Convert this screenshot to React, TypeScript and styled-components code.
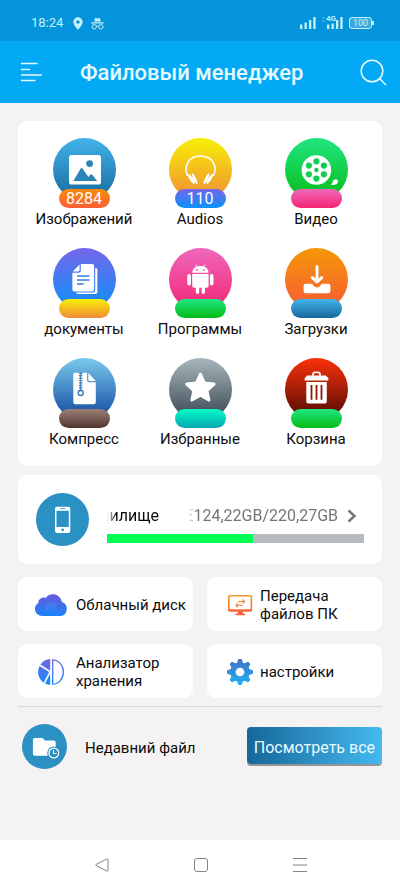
import React from "react";
import styled, { createGlobalStyle } from "styled-components";

const GlobalStyle = createGlobalStyle`
  *, *::before, *::after { box-sizing: border-box; }
  body {
    margin: 0;
    background: #f4f2f3;
    color: #0c0c0c;
    font-family: Roboto, "Noto Sans", sans-serif;
    font-size: 16px;
  }
  button {
    border: 0;
    padding: 0;
    background: none;
    color: inherit;
    font: inherit;
    cursor: pointer;
  }
  svg { display: block; flex: none; }
`;

const Screen = styled.div`
  display: flex;
  flex-direction: column;
  min-height: 100vh;
`;

const StatusBar = styled.div`
  display: flex;
  align-items: center;
  justify-content: space-between;
  height: 41px;
  padding: 5px 28px 0 31px;
  background: #0494dc;
  color: #c4f1f8;
`;

const StatusGroup = styled.div<{ $gap: number }>`
  display: flex;
  align-items: center;
  gap: ${(p) => p.$gap}px;
`;

const Clock = styled.time`
  margin-right: 2px;
  font-size: 13px;
  line-height: 16px;
`;

const MobileSignal = styled.span`
  position: relative;
`;

const NetworkType = styled.span`
  position: absolute;
  left: 4px;
  top: -2px;
  font-size: 8px;
  line-height: 8px;
  font-weight: 700;
`;

const Battery = styled.span`
  position: relative;
  display: flex;
  align-items: center;
  justify-content: center;
  width: 23px;
  height: 12px;
  border: 1px solid currentColor;
  border-radius: 3px;
  background: #3ba9df;
  font-size: 9px;
  line-height: 10px;

  &::after {
    content: "";
    position: absolute;
    left: 22px;
    top: 3px;
    width: 2px;
    height: 4px;
    background: currentColor;
  }
`;

const Header = styled.header`
  display: flex;
  align-items: center;
  height: 62px;
  padding: 0 13px 0 20px;
  background: #04a9f6;
  color: #e6fbff;
`;

const Title = styled.h1`
  flex: 1;
  margin: 2px 0 0 38px;
  font-size: 22px;
  line-height: 28px;
  font-weight: 500;
`;

const Content = styled.main`
  flex: 1;
  padding: 18px 18px 0;
`;

const Card = styled.section`
  border-radius: 9px;
  background: #fff;
`;

const CategoryGrid = styled(Card)`
  display: grid;
  grid-template-columns: repeat(3, 1fr);
  row-gap: 18px;
  padding: 17px 8px 16px;
`;

const Category = styled.button`
  display: flex;
  flex-direction: column;
  align-items: center;
`;

const Disc = styled.span<{ $fill: string; $size: number }>`
  display: flex;
  flex: none;
  width: ${(p) => p.$size}px;
  height: ${(p) => p.$size}px;
  border-radius: 50%;
  background: ${(p) => p.$fill};
  color: #fff;
`;

const Count = styled.span<{ $fill: string }>`
  width: 51px;
  height: 19px;
  margin-top: -12px;
  border-radius: 10px;
  background: ${(p) => p.$fill};
  color: #fff;
  font-size: 16px;
  line-height: 19px;
`;

const CategoryName = styled.span`
  margin-top: 1px;
  font-size: 15px;
  line-height: 21px;
  white-space: nowrap;
`;

const StorageCard = styled(Card)`
  display: flex;
  align-items: center;
  gap: 18px;
  height: 89px;
  margin-top: 9px;
  padding: 0 18px;
`;

const StorageInfo = styled.div`
  flex: 1;
  min-width: 0;
`;

const StorageHeading = styled.div`
  display: flex;
  align-items: center;
  height: 20px;
  margin: 10px 7px 8px 0;
`;

const Marquee = styled.span<{ $width: number; $muted?: boolean }>`
  display: flex;
  justify-content: flex-end;
  width: ${(p) => p.$width}px;
  margin-left: ${(p) => (p.$muted ? "auto" : "0")};
  margin-right: ${(p) => (p.$muted ? "9px" : "0")};
  overflow: hidden;
  color: ${(p) => (p.$muted ? "#757575" : "#0c0c0c")};
  font-size: 16px;
  line-height: 20px;
  white-space: nowrap;
  mask-image: linear-gradient(90deg, transparent, #000 9px);
`;

const Track = styled.div`
  height: 9px;
  background: #b8bcc2;
`;

const Used = styled.div`
  height: 100%;
  background: #00ff55;
`;

const Tiles = styled.div`
  display: grid;
  grid-template-columns: repeat(2, 1fr);
  gap: 13px 14px;
  margin-top: 13px;
`;

const Tile = styled.button<{ $compact?: boolean }>`
  && {
    display: flex;
    align-items: center;
    gap: ${(p) => (p.$compact ? 7 : 9)}px;
    height: 54px;
    padding: 1px 0 0 ${(p) => (p.$compact ? 20 : 17)}px;
    border-radius: 9px;
    background: #fff;
    font-size: 15px;
    line-height: 18px;
    text-align: left;
  }
`;

const Divider = styled.hr`
  height: 1px;
  margin: 8px 0 17px;
  border: 0;
  background: #dad8d9;
`;

const Recent = styled.section`
  display: flex;
  align-items: center;
  padding-left: 4px;
`;

const RecentName = styled.h2`
  flex: 1;
  margin: 2px 0 0 18px;
  font-size: 15px;
  line-height: 20px;
  font-weight: 400;
`;

const ShowAll = styled.button`
  && {
    height: 37px;
    margin-bottom: 2px;
    padding: 3px 7px 0;
    border-radius: 4px;
    background: linear-gradient(90deg, #176799, #44baf0);
    box-shadow: 0 2px 0 #949494;
    color: #e9fbff;
    white-space: nowrap;
  }
`;

const NavBar = styled.nav`
  display: grid;
  grid-template-columns: repeat(3, 1fr);
  height: 49px;
  padding: 0 51px 0 52px;
  background: #fff;
  color: #858585;
`;

const NavButton = styled.button`
  display: flex;
  align-items: center;
  justify-content: center;
`;

function SignalIcon() {
  return (
    <svg width="16" height="12" viewBox="0 0 16 12" fill="currentColor" aria-hidden="true">
      <path d="M0 7.5h2.3V12H0zM4.5 5.5h2.3V12H4.5zM9 3h2.3v9H9zM13.3 0h2.3v12h-2.3z" />
    </svg>
  );
}

function PinIcon() {
  return (
    <svg width="10" height="13" viewBox="0 0 10 13" aria-hidden="true">
      <path
        fill="currentColor"
        fillRule="evenodd"
        d="M5 .3A4.7 4.7 0 0 0 .3 5C.3 8.3 5 12.7 5 12.7S9.7 8.3 9.7 5A4.7 4.7 0 0 0 5 .3Zm0 3a1.7 1.7 0 1 1 0 3.4 1.7 1.7 0 0 1 0-3.4Z"
      />
    </svg>
  );
}

function IncognitoIcon() {
  return (
    <svg width="13" height="13" viewBox="0 0 13 13" aria-hidden="true">
      <path d="M3.2 4.6 4.2.8l2.3.7L8.8.8l1 3.8ZM.3 5.3h12.4v1.2H.3z" fill="currentColor" />
      <g fill="none" stroke="currentColor">
        <circle cx="3.2" cy="9.8" r="2.2" />
        <circle cx="9.8" cy="9.8" r="2.2" />
        <path d="M5.3 9.4c.8-.5 1.6-.5 2.4 0" />
      </g>
    </svg>
  );
}

function Glyph({ children }: { children: React.ReactNode }) {
  return (
    <svg width="63" height="63" viewBox="0 0 63 63" fill="currentColor" aria-hidden="true">
      {children}
    </svg>
  );
}

const imageGlyph = (
  <Glyph>
    <rect x="16" y="17" width="32" height="29.5" rx="2.6" />
    <g fill="#2a84b4">
      <circle cx="36.6" cy="25.6" r="3.4" />
      <path d="M20.3 43 27.7 30.6q.9-1.2 1.8 0l6 8.4 1.9-2.4q.8-.8 1.6 0L44.2 43Z" />
    </g>
  </Glyph>
);

const headphonesGlyph = (
  <Glyph>
    <path
      d="M18.6 38C14 27.500 20 18 31.500 18s17.500 9.500 12.900 20"
      fill="none"
      stroke="currentColor"
      strokeWidth="1.5"
    />
    <g id="ear">
      <ellipse cx="22.4" cy="41" rx="1.7" ry="5.8" transform="rotate(-32 22.4 41)" />
      <ellipse cx="25.7" cy="40.8" rx="1.3" ry="6" transform="rotate(-26 25.7 40.8)" />
    </g>
    <use href="#ear" transform="translate(63 0) scale(-1 1)" />
  </Glyph>
);

const reelHoles = [
  [31.4, 23.3],
  [38.9, 27.6],
  [38.9, 36.3],
  [31.4, 40.6],
  [23.9, 36.3],
  [23.9, 27.6],
];

const videoGlyph = (
  <Glyph>
    <circle cx="31.4" cy="32" r="14.8" />
    <g fill="#12cd51">
      {reelHoles.map(([x, y]) => (
        <circle key={`${x}-${y}`} cx={x} cy={y} r="3.1" />
      ))}
      <circle cx="31.4" cy="32" r="2.2" />
    </g>
    <path d="M44.8 46.6c3.2-.2 2-2.7 4-4.6 2-1.8 4.6-.4 4.2 1.8-.5 3.6-5 3.4-8.2 2.8Z" />
  </Glyph>
);

const documentsGlyph = (
  <Glyph>
    <path d="M42.2 20h.5q1.7 0 1.7 1.7v22.6q0 1.8-1.8 1.8H25.3q-2 0-2.2-1.7h16.6q2.5 0 2.5-2.5Z" />
    <path d="M27.8 16h11.5q1.8 0 1.8 1.8v23.8q0 1.9-1.8 1.9H21.2q-1.8 0-1.8-1.9V24.8h6.3q2.1 0 2.1-2.1Z" />
    <path d="M19.8 23.4 26.6 16.5v5.2q0 1.7-1.7 1.7Z" />
    <path d="M24 28h12.5M24 32h12.5M24 36h6.5" stroke="#2b7ee9" strokeWidth="1.6" />
  </Glyph>
);

const androidGlyph = (
  <Glyph>
    <path d="M23.2 24.7c.2-4 3.4-6.6 8.2-6.6s8 2.6 8.2 6.6ZM23.2 26h16.4v11.7q0 2-2 2H36v4.5a1.7 1.7 0 0 1-3.4 0v-4.5h-2.4v4.5a1.7 1.7 0 0 1-3.4 0v-4.5h-1.6q-2 0-2-2Z" />
    <rect x="18.3" y="26" width="3.6" height="11.6" rx="1.8" />
    <rect x="40.9" y="26" width="3.6" height="11.6" rx="1.8" />
    <path d="m26.6 16.4 1.6 2.8M36.2 16.4l-1.6 2.8" stroke="currentColor" strokeWidth=".8" />
    <g fill="#f04fa2">
      <circle cx="27.8" cy="22" r=".9" />
      <circle cx="35" cy="22" r=".9" />
    </g>
  </Glyph>
);

const downloadGlyph = (
  <Glyph>
    <path
      d="M32 18.5v14M27.3 29.6 32 34l4.7-4.4"
      fill="none"
      stroke="currentColor"
      strokeWidth="3"
      strokeLinecap="round"
      strokeLinejoin="round"
    />
    <path d="M20.8 35.8h5.6q1.1 0 1.7 1.3c1.8 3.2 6 3.2 7.8 0q.6-1.3 1.7-1.3h5.6q2.2 0 2.2 2.2v5q0 2.3-2.2 2.3H20.8q-2.2 0-2.2-2.3v-5q0-2.2 2.2-2.2Z" />
  </Glyph>
);

const zipGlyph = (
  <Glyph>
    <path d="M21.8 14.7H34v7.4q0 2.2 2.2 2.2h6.6v20q0 1.9-1.9 1.9H22.2q-1.9 0-1.9-1.9V16.2q0-1.5 1.5-1.5Z" />
    <path d="M35.4 14.9v6.5q0 1.5 1.5 1.5h5.8Z" />
    <g stroke="#3c79ba" fill="none">
      <path d="M27.7 14.7v18" strokeWidth="3.4" strokeDasharray="1.2 1.2" />
      <path d="M27.7 14.7v18" strokeWidth="1" />
      <circle cx="27.7" cy="35" r="2.5" strokeWidth="1.4" />
    </g>
  </Glyph>
);

const starGlyph = (
  <Glyph>
    <path
      d="m31.4 16.2 4 8.8 9.7 1.1-7.2 6.5 2 9.4-8.5-4.8-8.5 4.8 2-9.4-7.2-6.5 9.7-1.1Z"
      stroke="currentColor"
      strokeWidth="3"
      strokeLinejoin="round"
    />
  </Glyph>
);

const trashGlyph = (
  <Glyph>
    <path
      d="M28 18.5v-2.2q0-2 2-2h3q2 0 2 2v2.2"
      fill="none"
      stroke="currentColor"
      strokeWidth="1.7"
    />
    <path d="M22.3 17.6h18.4q2.8 1.6 2.8 5H19.5q0-3.4 2.8-5ZM21.3 24.1h20.5v19.3q0 2-2 2H23.3q-2 0-2-2Z" />
    <path d="M26.5 27v14.8M31.5 27v14.8M36.5 27v14.8" stroke="#8b1b07" strokeWidth="1.8" />
  </Glyph>
);

const down = (from: string, to: string) => `linear-gradient(180deg, ${from}, ${to})`;

const blue = down("#42b3ea", "#17699c");
const green = down("#20e681", "#06bb17");
const pink = down("#ee68bb", "#f42473");
const violet = down("#7566eb", "#0b91fa");
const yellow = down("#f7f005", "#f08b38");
const orange = down("#f49705", "#f85a38");

const categories = [
  { name: "Изображений", count: "8284", disc: blue, pill: down("#fb8b0b", "#fb5f35"), glyph: imageGlyph },
  { name: "Audios", count: "110", disc: yellow, pill: violet, glyph: headphonesGlyph },
  { name: "Видео", count: "", disc: green, pill: pink, glyph: videoGlyph },
  { name: "документы", count: "", disc: violet, pill: yellow, glyph: documentsGlyph },
  { name: "Программы", count: "", disc: pink, pill: green, glyph: androidGlyph },
  { name: "Загрузки", count: "", disc: orange, pill: blue, glyph: downloadGlyph },
  { name: "Компресс", count: "", disc: down("#7bc9ed", "#0d459c"), pill: down("#9c8078", "#4f342e"), glyph: zipGlyph },
  { name: "Избранные", count: "", disc: down("#a8b5bc", "#36464e"), pill: down("#04fbc8", "#04a8b0"), glyph: starGlyph },
  { name: "Корзина", count: "", disc: down("#fa3009", "#4c0a04"), pill: green, glyph: trashGlyph },
];

function CloudIcon() {
  return (
    <svg width="32" height="22" viewBox="0 0 32 22" aria-hidden="true">
      <defs>
        <linearGradient id="cloud" x1="0" y1="0" x2="0" y2="1">
          <stop offset="0" stopColor="#6c58dc" />
          <stop offset="1" stopColor="#1684fa" />
        </linearGradient>
        <linearGradient id="puff" x1="0" y1="0" x2="0" y2="1">
          <stop offset="0" stopColor="#5b8cf2" />
          <stop offset="1" stopColor="#1684fa" />
        </linearGradient>
      </defs>
      <path
        d="M7 22a7 7 0 0 1-3.6-13C3.2 5.3 7.4 2.6 10.7 4 14-1.8 25-1.5 27 8.1A7.2 7.2 0 0 1 25.5 22Z"
        fill="url(#cloud)"
      />
      <circle cx="16" cy="14.500" r="6" fill="url(#puff)" opacity=".5" />
    </svg>
  );
}

function PieIcon() {
  return (
    <svg width="32" height="26" viewBox="0 0 32 26" aria-hidden="true">
      <defs>
        <linearGradient id="pie" gradientUnits="userSpaceOnUse" x1="0" y1="0" x2="0" y2="26">
          <stop offset="0" stopColor="#7663e4" />
          <stop offset="1" stopColor="#0d92fa" />
        </linearGradient>
      </defs>
      <path
        d="M15.2 0v11.8L5.4 5.6A13 13 0 0 1 15.2 0ZM4.6 6.9 14.2 13 8.6 23.7A13 13 0 0 1 4.6 6.9ZM15.2 14.5V26a13 13 0 0 1-5.2-1.5Z"
        fill="url(#pie)"
      />
      <path
        d="M17.7.8a10.7 12.2 0 0 1 0 24.4Z"
        fill="none"
        stroke="url(#pie)"
        strokeWidth="1.3"
      />
    </svg>
  );
}

function MonitorIcon() {
  return (
    <svg width="26" height="22" viewBox="0 0 26 22" aria-hidden="true">
      <defs>
        <linearGradient id="monitor" gradientUnits="userSpaceOnUse" x1="0" y1="0" x2="0" y2="22">
          <stop offset="0" stopColor="#f39b21" />
          <stop offset="1" stopColor="#f4593c" />
        </linearGradient>
      </defs>
      <g fill="none" stroke="url(#monitor)">
        <rect x="1.8" y="1.8" width="22.6" height="15" rx="1" strokeWidth="1.6" />
        <path d="M11 7.500h6.500M15.600 5.500l2 2-2 2M15.500 11.300H9M10.900 9.300 9 11.300l1.900 2" strokeWidth="1.1" />
      </g>
      <path d="M1.500 15.200h23.200v2.400H1.500zM11 17h4.500l.5 2.800h2v1.400H8.500v-1.400h2Z" fill="url(#monitor)" />
    </svg>
  );
}

function GearIcon() {
  const teeth = [0, 45, 90, 135, 180, 225, 270, 315];
  return (
    <svg width="26" height="26" viewBox="0 0 26 26" aria-hidden="true">
      <defs>
        <linearGradient id="gear" x1="0" y1="0" x2="0" y2="1">
          <stop offset="0" stopColor="#4470c4" />
          <stop offset="1" stopColor="#1db1f5" />
        </linearGradient>
        <mask id="gear-shape">
          <g fill="#fff">
            <circle cx="13" cy="13" r="9.8" />
            {teeth.map((angle) => (
              <path key={angle} d="M9.800 5 11 .8q.2-.8 1-.8h2q.8 0 1 .8L16.200 5Z" transform={`rotate(${angle} 13 13)`} />
            ))}
          </g>
          <circle cx="13" cy="13" r="4.3" fill="#000" />
        </mask>
      </defs>
      <rect width="26" height="26" fill="url(#gear)" mask="url(#gear-shape)" />
    </svg>
  );
}

const tiles = [
  { name: "Облачный диск", icon: <CloudIcon />, compact: false },
  { name: "Передача файлов ПК", icon: <MonitorIcon />, compact: true },
  { name: "Анализатор хранения", icon: <PieIcon />, compact: false },
  { name: "настройки", icon: <GearIcon />, compact: true },
];

const usedShare = 57;

export default function App() {
  return (
    <Screen>
      <GlobalStyle />
      <StatusBar>
        <StatusGroup $gap={8}>
          <Clock>18:24</Clock>
          <PinIcon />
          <IncognitoIcon />
        </StatusGroup>
        <StatusGroup $gap={6}>
          <SignalIcon />
          <MobileSignal>
            <svg width="21" height="12" viewBox="0 0 21 12" fill="currentColor" aria-hidden="true">
              <path d="M5 7.5h2.3V12H5zM9.5 6.5h2.3V12H9.5zM14 3h2.3v9H14zM18.3 0h2.3v12h-2.3z" />
              <path d="m0 2 1.500-2L3 2ZM0 3.500h3l-1.500 2Z" opacity=".4" />
            </svg>
            <NetworkType>4G</NetworkType>
          </MobileSignal>
          <Battery>100</Battery>
        </StatusGroup>
      </StatusBar>

      <Header>
        <button type="button" aria-label="Меню">
          <svg width="22" height="20" viewBox="0 0 22 20" stroke="currentColor" strokeWidth="1.5" aria-hidden="true">
            <path d="M1 1.500h16.500M1 7.500h9M1 13h21M1 18.500h14.500" />
          </svg>
        </button>
        <Title>Файловый менеджер</Title>
        <button type="button" aria-label="Поиск">
          <svg width="27" height="27" viewBox="0 0 27 27" fill="none" stroke="currentColor" strokeWidth="1.5" aria-hidden="true">
            <circle cx="12" cy="12" r="10.8" />
            <path d="m19.500 19.500 6.500 6.500" />
          </svg>
        </button>
      </Header>

      <Content>
        <CategoryGrid>
          {categories.map((item) => (
            <Category key={item.name} type="button">
              <Disc $fill={item.disc} $size={63}>{item.glyph}</Disc>
              <Count $fill={item.pill}>{item.count}</Count>
              <CategoryName>{item.name}</CategoryName>
            </Category>
          ))}
        </CategoryGrid>

        <StorageCard>
          <Disc $fill="#2b90c2" $size={53}>
            <svg width="53" height="53" viewBox="0 0 53 53" fill="currentColor" aria-hidden="true">
              <rect x="19" y="13.7" width="15.3" height="26.3" rx="2" />
              <g fill="#2b90c2">
                <path d="M20.500 17.700h12.300V34H20.500zM24 15.300h5.300v.8H24z" />
                <circle cx="26.7" cy="36.9" r="1.3" />
              </g>
            </svg>
          </Disc>
          <StorageInfo>
            <StorageHeading>
              <Marquee $width={52}>Хранилище</Marquee>
              <Marquee $width={150} $muted>E124,22GB/220,27GB</Marquee>
              <svg width="10" height="14" viewBox="0 0 10 14" fill="none" stroke="#757575" strokeWidth="2.4" aria-hidden="true">
                <path d="m1.500 1.500 6 5.500-6 5.500" />
              </svg>
            </StorageHeading>
            <Track role="progressbar" aria-label="Хранилище" aria-valuenow={usedShare}>
              <Used style={{ width: `${usedShare}%` }} />
            </Track>
          </StorageInfo>
        </StorageCard>

        <Tiles>
          {tiles.map((tile) => (
            <Tile key={tile.name} type="button" $compact={tile.compact}>
              {tile.icon}
              <span>{tile.name}</span>
            </Tile>
          ))}
        </Tiles>

        <Divider />

        <Recent>
          <Disc $fill="#2b90c2" $size={45}>
            <svg width="45" height="45" viewBox="0 0 45 45" fill="currentColor" aria-hidden="true">
              <path d="M12.800 14h7q1 0 1.600.8l1.300 1.700h9q2 0 2 2v11.300q0 2-2 2H12.900q-2 0-2-2V16q0-2 1.900-2Z" />
              <circle cx="31.8" cy="29" r="6.6" fill="#2b90c2" />
              <circle cx="31.8" cy="29" r="4.9" fill="none" stroke="currentColor" strokeWidth="1.2" />
              <path d="M31.500 26v3.500h3" fill="none" stroke="currentColor" strokeWidth="1.1" />
            </svg>
          </Disc>
          <RecentName>Недавний файл</RecentName>
          <ShowAll type="button">Посмотреть все</ShowAll>
        </Recent>
      </Content>

      <NavBar>
        <NavButton type="button" aria-label="Назад">
          <svg width="14" height="14" viewBox="0 0 14 14" fill="none" stroke="currentColor" aria-hidden="true">
            <path d="M12 .9.9 6.500q-.7.500 0 1L12 13.100q1 .3 1-.7V1.600q0-1-1-.7Z" />
          </svg>
        </NavButton>
        <NavButton type="button" aria-label="Домой">
          <svg width="14" height="14" viewBox="0 0 14 14" fill="none" stroke="currentColor" aria-hidden="true">
            <rect x=".5" y=".5" width="13" height="13" rx="2.5" />
          </svg>
        </NavButton>
        <NavButton type="button" aria-label="Недавние приложения">
          <svg width="14" height="14" viewBox="0 0 14 14" fill="none" stroke="currentColor" aria-hidden="true">
            <path d="M0 .5h14M0 7h14M0 13.500h14" />
          </svg>
        </NavButton>
      </NavBar>
    </Screen>
  );
}
